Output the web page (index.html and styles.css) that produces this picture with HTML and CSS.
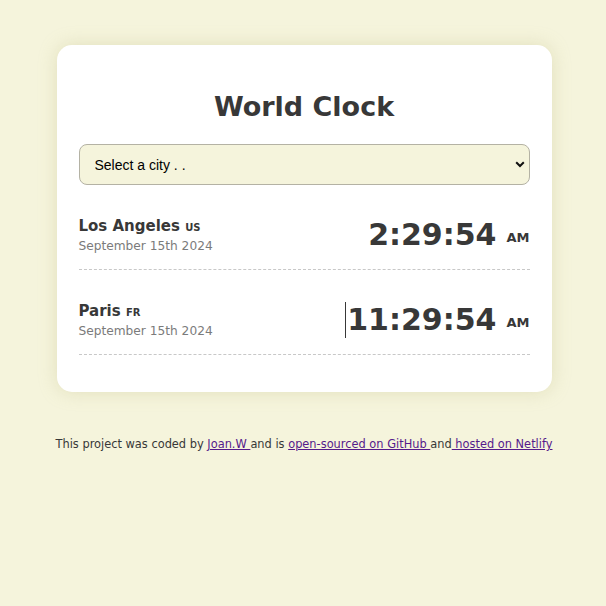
FILE: index.html
```html
<!DOCTYPE html>
<html lang="en">
<head>
<meta charset="utf-8">
<title>World Clock</title>
<link rel="stylesheet" href="styles.css">
</head>
<body>
<div class="card">
  <h1 class="title">World Clock</h1>
  <div class="select-wrap">
    <select class="city-select">
      <option>Select a city . .</option>
    </select>
    <svg class="chevron" width="10" height="7" viewBox="0 0 10 7"><path d="M1.2 1.3 L5 5 L8.8 1.3" fill="none" stroke="#111" stroke-width="2"/></svg>
  </div>
  <div class="cities">
    <div class="city">
      <div class="info">
        <div class="name">Los Angeles <span class="code">US</span></div>
        <div class="date">September 15th 2024</div>
      </div>
      <div class="time">2:29:54 <span class="ampm">AM</span></div>
    </div>
    <div class="city">
      <div class="info">
        <div class="name">Paris <span class="code">FR</span></div>
        <div class="date">September 15th 2024</div>
      </div>
      <div class="time"><span class="caret"></span>11:29:54 <span class="ampm">AM</span></div>
    </div>
  </div>
</div>
<footer class="footer">This project was coded by <a href="#">Joan.W </a>and is <a href="#">open-sourced on GitHub </a>and<a href="#"> hosted on Netlify</a></footer>
</body>
</html>
```
FILE: styles.css
```css
html, body {
  margin: 0;
  padding: 0;
}
body {
  background: #f5f4dc;
  font-family: "DejaVu Sans", Verdana, sans-serif;
  color: #383838;
  padding-top: 45px;
  padding-left: 2px;
}
.card {
  width: 451px;
  margin: 0 auto;
  background: #fff;
  border-radius: 15px;
  padding: 41px 22px 37px;
  box-shadow: 0 0 18px rgba(190, 185, 130, 0.35);
}
.title {
  margin: 0 0 16px;
  text-align: center;
  font-size: 27px;
  font-weight: bold;
  line-height: 42px;
  color: #383838;
}
.select-wrap {
  position: relative;
}
.city-select {
  display: block;
  width: 100%;
  height: 41px;
  appearance: none;
  -webkit-appearance: none;
  background: #f5f4dc;
  border: 1px solid #b4b2a4;
  border-radius: 8px;
  padding: 0 15px;
  font-family: "Liberation Sans", Arial, sans-serif;
  font-size: 14px;
  color: #000;
}
.chevron {
  position: absolute;
  right: 5px;
  top: 17px;
}
.city {
  display: flex;
  justify-content: space-between;
  align-items: center;
  height: 36px;
  padding: 32px 0 16px;
  border-bottom: 1px dashed #c8c8c8;
}
.info {
  height: 37px;
}
.name {
  font-size: 15px;
  font-weight: bold;
  line-height: 18px;
  height: 18px;
  color: #383838;
}
.code {
  font-size: 10px;
  text-transform: uppercase;
}
.date {
  font-size: 12.2px;
  line-height: 15px;
  height: 15px;
  color: #7b7b7b;
  margin-top: 4px;
}
.time {
  font-size: 30px;
  font-weight: bold;
  line-height: 36px;
  height: 36px;
  color: #383838;
  display: flex;
  align-items: center;
}
.ampm {
  font-size: 13px;
  line-height: 16px;
  margin-left: 10px;
  margin-top: 6px;
}
.caret {
  display: inline-block;
  width: 1px;
  height: 36px;
  background: #383838;
  margin-right: 1px;
}
.footer {
  text-align: center;
  font-size: 11.4px;
  margin-top: 45px;
  color: #383838;
}
.footer a {
  color: #551a8b;
}
```
